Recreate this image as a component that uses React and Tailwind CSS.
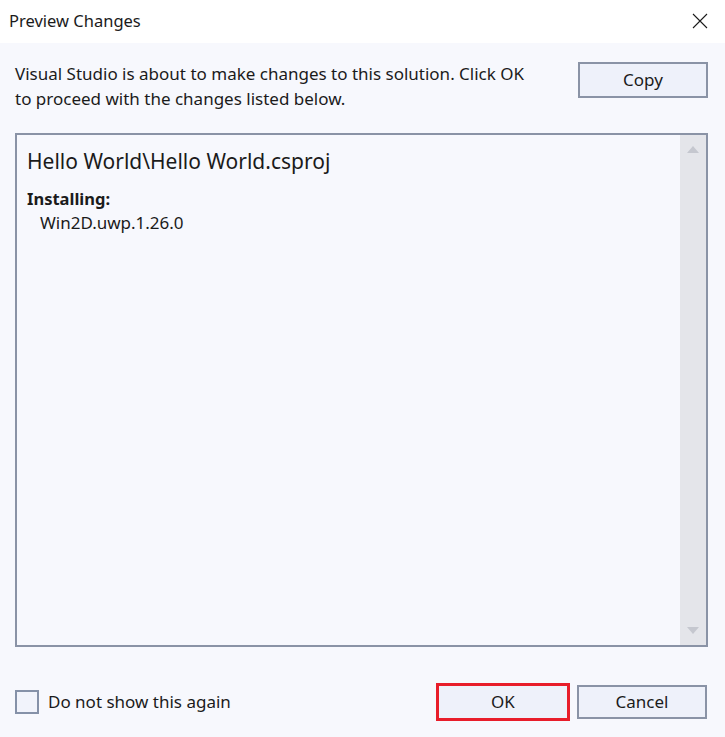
import React from 'react';

const font = { fontFamily: '"Noto Sans", "Open Sans", sans-serif' };

export default function App() {
  return (
    <div className="w-[725px] h-[737px] flex flex-col bg-[#f7f8fd] text-[#1b1b1b] overflow-hidden" style={font}>
      {/* title bar */}
      <div className="h-[43px] bg-white flex items-center justify-between pl-[9px] pr-[17px] shrink-0">
        <span className="text-[16.5px]">Preview Changes</span>
        <svg width="16" height="16" viewBox="0 0 16 16" className="mt-[-1px]">
          <path d="M1 1 L15 15 M15 1 L1 15" stroke="#1b1b1b" strokeWidth="1.1" fill="none" />
        </svg>
      </div>

      {/* intro row */}
      <div className="flex justify-between pl-[15px] pr-[17px] pt-[18px] h-[90px] shrink-0">
        <p className="text-[17px] leading-[25px] w-[520px]">
          Visual Studio is about to make changes to this solution. Click OK to proceed with the changes listed below.
        </p>
        <button className="w-[130px] h-[36px] mt-[1px] border-2 border-[#8a93a6] bg-[#eef1fa] text-[17px]">
          Copy
        </button>
      </div>

      {/* change list */}
      <div className="mx-[15px] mr-[17px] h-[514px] border-2 border-[#8a93a6] flex">
        <div className="flex-1 pl-[10px] pt-[12px]">
          <div className="text-[21px] leading-[28px]">Hello World\Hello World.csproj</div>
          <div className="text-[16.5px] font-bold mt-[12px] leading-[24px]">Installing:</div>
          <div className="text-[17px] pl-[13px] leading-[24px]">Win2D.uwp.1.26.0</div>
        </div>
        <div className="w-[26px] bg-[#e4e5ea] flex flex-col justify-between items-center py-[11px]">
          <svg width="12" height="7" viewBox="0 0 12 7"><path d="M6 0 L12 7 L0 7 Z" fill="#c5c7cf" /></svg>
          <svg width="12" height="7" viewBox="0 0 12 7"><path d="M0 0 L12 0 L6 7 Z" fill="#c5c7cf" /></svg>
        </div>
      </div>

      {/* footer */}
      <div className="flex items-center justify-between pl-[15px] pr-[18px] mt-[36px]">
        <label className="flex items-center gap-[9px]">
          <span className="w-[24px] h-[24px] border-2 border-[#8591a8] bg-[#f1f3fb]" />
          <span className="text-[17px]">Do not show this again</span>
        </label>
        <div className="flex gap-[7px] items-center">
          <button className="w-[134px] h-[38px] border-[3px] border-[#e81d2a] bg-[#eef1fa] text-[17px]">OK</button>
          <button className="w-[130px] h-[34px] border-2 border-[#8a93a6] bg-[#eef1fa] text-[17px]">Cancel</button>
        </div>
      </div>
    </div>
  );
}
